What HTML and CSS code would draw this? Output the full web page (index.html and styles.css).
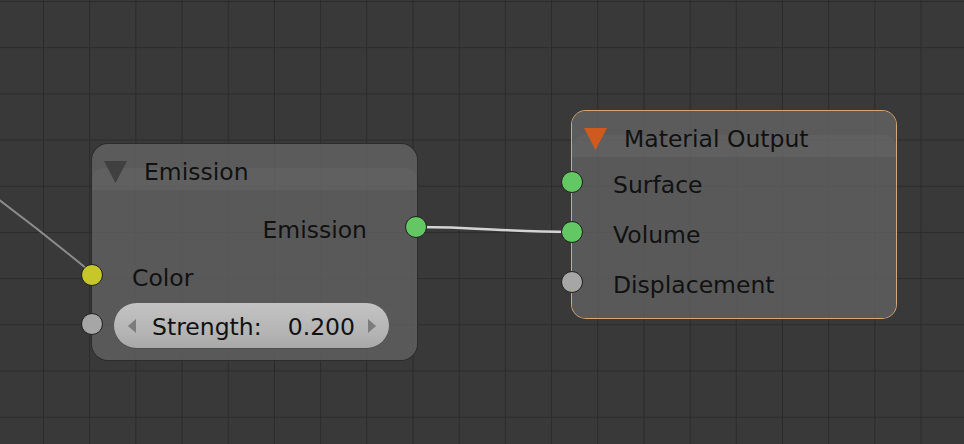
FILE: index.html
```html
<!DOCTYPE html>
<html lang="en">
<head>
<meta charset="utf-8">
<title>Node Editor</title>
<link rel="stylesheet" href="styles.css">
</head>
<body>
<main class="editor">
  <svg class="links" width="964" height="444" viewBox="0 0 964 444">
    <path class="link dim" d="M-2 199 C 50 238, 76 260, 93 274"/>
    <path class="link" d="M416 227 C 480 227, 505 232, 572 232"/>
  </svg>

  <section class="node emission">
    <header class="node-header">
      <svg class="collapse" width="23" height="22" viewBox="0 0 23 22"><polygon points="0,0 23,0 11.5,22"/></svg>
      <span class="title">Emission</span>
    </header>
    <div class="node-body">
      <div class="row out row-emission"><span class="label">Emission</span><span class="socket shader"></span></div>
      <div class="row in row-color"><span class="socket color"></span><span class="label">Color</span></div>
      <div class="row in row-strength">
        <span class="socket value"></span>
        <div class="field">
          <svg class="arrow" width="10" height="14" viewBox="0 0 10 14"><polygon points="9,0 9,14 1,7"/></svg>
          <span class="field-label">Strength:</span>
          <span class="field-value">0.200</span>
          <svg class="arrow" width="10" height="14" viewBox="0 0 10 14"><polygon points="1,0 1,14 9,7"/></svg>
        </div>
      </div>
    </div>
  </section>

  <section class="node output active">
    <header class="node-header">
      <svg class="collapse" width="23" height="22" viewBox="0 0 23 22"><polygon points="0,0 23,0 11.5,22"/></svg>
      <span class="title">Material Output</span>
    </header>
    <div class="node-body">
      <div class="row in"><span class="socket shader"></span><span class="label">Surface</span></div>
      <div class="row in"><span class="socket shader"></span><span class="label">Volume</span></div>
      <div class="row in"><span class="socket value"></span><span class="label">Displacement</span></div>
    </div>
  </section>
</main>
</body>
</html>
```

FILE: styles.css
```css
* {
  box-sizing: border-box;
  margin: 0;
  padding: 0;
}

html,
body {
  width: 964px;
  height: 444px;
  overflow: hidden;
}

body {
  background: #393939;
  font-family: "DejaVu Sans", "Liberation Sans", sans-serif;
  font-size: 23.5px;
  color: #111111;
}

.editor {
  position: relative;
  width: 964px;
  height: 444px;
  background-color: #393939;
  background-image:
    linear-gradient(to right, #2b2b2b 1px, transparent 1px),
    linear-gradient(to bottom, #2b2b2b 1px, transparent 1px);
  background-size: 46.2px 46.2px;
  background-position: 43px 1px;
}

.links {
  position: absolute;
  left: 0;
  top: 0;
}

.link {
  fill: none;
  stroke: #d4d4d4;
  stroke-width: 2.5;
}

.link.dim {
  stroke: #8c8c8c;
  stroke-width: 2;
}

/* nodes sit at their canvas coordinates */
.node {
  position: absolute;
  display: flex;
  flex-direction: column;
  border-radius: 16px;
  box-shadow: 0 0 0 1px #2c2c2c;
}

.node.emission {
  left: 92px;
  top: 144px;
  width: 325px;
  height: 216px;
}

.node.output {
  left: 572px;
  top: 111px;
  width: 324px;
  height: 207px;
  border-radius: 14px;
}

.node.active {
  box-shadow: 0 0 0 1px #d2a676;
}

.node-header {
  position: relative;
  height: 46px;
  padding: 10px 0 0 12px;
  display: flex;
  align-items: center;
  gap: 17px;
  background: rgba(100, 100, 100, 0.8);
  border-radius: 16px 16px 0 0;
}

.output .node-header {
  border-radius: 14px 14px 0 0;
}

.node-header::before {
  content: "";
  position: absolute;
  left: 0;
  right: 0;
  bottom: 0;
  height: 22px;
  border-radius: 12px 12px 0 0;
  background: rgba(255, 255, 255, 0.035);
}

.collapse,
.title {
  position: relative;
}

.collapse polygon {
  fill: #404040;
}

.output .collapse polygon {
  fill: #cf5a1e;
}

.title {
  white-space: nowrap;
}

.node-body {
  flex: 1;
  background: rgba(97, 97, 97, 0.8);
  border-radius: 0 0 16px 16px;
}

.output .node-body {
  border-radius: 0 0 14px 14px;
}

.emission .node-body {
  padding-top: 13px;
}

.row {
  position: relative;
  display: flex;
  align-items: center;
}

.label {
  padding-top: 6px;
  white-space: nowrap;
}

.socket {
  position: absolute;
  top: 50%;
  width: 22px;
  height: 22px;
  margin-top: -11px;
  border-radius: 50%;
  border: 1px solid #1e1e1e;
}

.in .socket {
  left: -11px;
}

.out .socket {
  right: -10px;
}

.socket.shader {
  background: #63c763;
}

.socket.color {
  background: #c7c729;
}

.socket.value {
  background: #a6a6a6;
}

.row-emission {
  height: 48px;
  justify-content: flex-end;
  padding-right: 50px;
}

.row-color {
  height: 47px;
  padding-left: 40px;
}

.row-strength {
  height: 45px;
  margin-top: 5px;
  padding-left: 22px;
}

.row-strength .socket {
  margin-top: -12.5px;
}

.field {
  width: 275px;
  height: 45px;
  display: flex;
  align-items: center;
  padding: 0 12px 0 13px;
  border-radius: 22.5px;
  background: linear-gradient(#c3c3c3, #b3b3b3 70%, #a8a8a8);
  box-shadow: 0 1px 0 #4e4e4e;
}

.arrow polygon {
  fill: #7c7c7c;
}

.field-label {
  margin-left: 15px;
  padding-top: 3px;
  flex: 1;
}

.field-value {
  margin-right: 12px;
  padding-top: 3px;
}

.output .row {
  height: 50px;
  padding-left: 41px;
}
```
